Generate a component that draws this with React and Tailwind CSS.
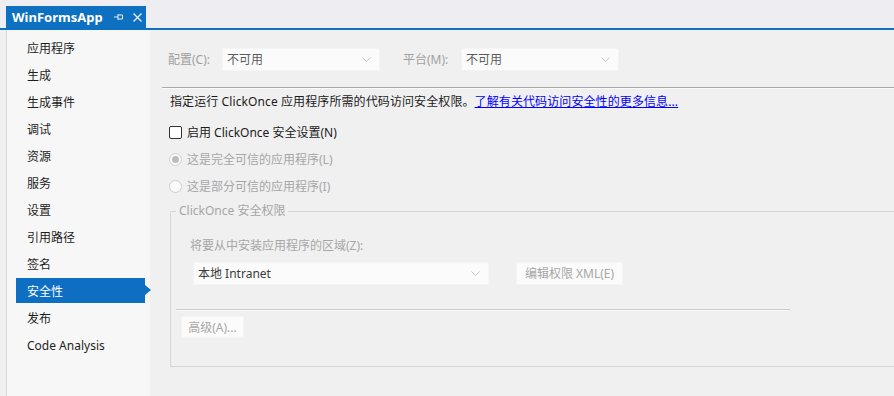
import React from "react";

const FONT = { fontFamily: '"Noto Sans", "Noto Sans CJK SC", sans-serif' };

const navItems = ["应用程序", "生成", "生成事件", "调试", "资源", "服务", "设置", "引用路径", "签名", "安全性", "发布", "Code Analysis"];

function Chevron() {
  return (
    <svg width="9" height="5" viewBox="0 0 9 5" className="shrink-0">
      <path d="M0.5 0.5 L4.5 4.5 L8.5 0.5" fill="none" stroke="#c6c6c6" strokeWidth="1" />
    </svg>
  );
}

function Select({ text, className, textClass }) {
  return (
    <div className={`h-[23px] bg-[#fbfbfb] border border-[#f4f4f4] flex items-center justify-between pl-[4px] pr-[8px] ${className}`}>
      <span className={`text-[12px] pt-[1px] ${textClass}`}>{text}</span>
      <Chevron />
    </div>
  );
}

export default function App() {
  return (
    <div className="w-[894px] h-[396px] flex flex-col overflow-hidden bg-[#f0f0f0]" style={FONT}>
      <div className="h-[28px] bg-[#eeeef2] flex items-end pl-[6px] shrink-0">
        <div className="h-[22px] w-[140px] bg-[#0e70c0] flex items-center pl-[6px] text-white">
          <span className="text-[13px] font-bold leading-none">WinFormsApp</span>
          <svg width="10" height="10" viewBox="0 0 10 10" className="ml-[11px]">
            <path d="M0 5 H4 M4 2 V8 M4 3 H8.5 V7 H4" fill="none" stroke="#e8f0fa" strokeWidth="1" />
          </svg>
          <svg width="9" height="9" viewBox="0 0 9 9" className="ml-[9px]">
            <path d="M0.5 0.5 L8.5 8.5 M8.5 0.5 L0.5 8.5" fill="none" stroke="#e8f0fa" strokeWidth="1.3" />
          </svg>
        </div>
      </div>
      <div className="h-[2px] bg-[#0e70c0] shrink-0" />
      <div className="flex flex-1 min-h-0">
        <div className="w-[7px] bg-[#f0f0f0] border-r border-[#d9d9de] shrink-0" />
        <nav className="w-[143px] shrink-0 bg-[#f7f7f7] pt-[5px] flex flex-col gap-[2px]">
          {navItems.map((it) =>
            it === "安全性" ? (
              <div key={it} className="relative ml-[9px] w-[129px] h-[25px] bg-[#0e6fc2] flex items-center pl-[11px] pt-[2px] text-[12px] text-white">
                {it}
                <div className="absolute left-[129px] top-[7px] w-0 h-0 border-y-[5.5px] border-y-transparent border-l-[6px] border-l-[#0e6fc2]" />
              </div>
            ) : (
              <div key={it} className="ml-[9px] h-[25px] flex items-center pl-[11px] pt-[2px] text-[12px] text-[#1e1e1e]">
                {it}
              </div>
            )
          )}
        </nav>
        <main className="flex-1 min-w-0 bg-[#f0f0f0] flex flex-col">
          <div className="mt-[18px] flex items-center pl-[18px]">
            <span className="w-[54px] text-[12px] pt-[1px] text-[#a0a0a0]">配置(C):</span>
            <Select text="不可用" className="w-[158px]" textClass="text-[#5c5c5c]" />
            <span className="ml-[23px] w-[58px] text-[12px] pt-[1px] text-[#a0a0a0]">平台(M):</span>
            <Select text="不可用" className="w-[158px]" textClass="text-[#5c5c5c]" />
          </div>
          <div className="mt-[16px] ml-[12px] h-[1px] bg-[#a9a9a9]" />
          <div className="ml-[12px] h-[1px] bg-[#fafafa]" />
          <div className="mt-[5px] pl-[20px] h-[16px] flex items-center text-[12px] text-[#1b1b1b] whitespace-nowrap tracking-[0.1px]">
            指定运行 ClickOnce 应用程序所需的代码访问安全权限。
            <span className="text-[#0000ff] underline">了解有关代码访问安全性的更多信息...</span>
          </div>
          <div className="mt-[14px] pl-[19px] h-[16px] flex items-center">
            <div className="w-[13px] h-[13px] border border-[#333] rounded-[2px] bg-white" />
            <span className="ml-[5px] pt-[1px] text-[12px] text-[#1b1b1b]">启用 ClickOnce 安全设置(N)</span>
          </div>
          <div className="mt-[11px] pl-[19px] h-[16px] flex items-center">
            <div className="w-[13px] h-[13px] rounded-full border border-[#cfcfcf] bg-[#fafafa] flex items-center justify-center">
              <div className="w-[7px] h-[7px] rounded-full bg-[#bdbdbd]" />
            </div>
            <span className="ml-[5px] pt-[1px] text-[12px] text-[#a6a6a6]">这是完全可信的应用程序(L)</span>
          </div>
          <div className="mt-[11px] pl-[19px] h-[16px] flex items-center">
            <div className="w-[13px] h-[13px] rounded-full border border-[#cfcfcf] bg-[#fafafa]" />
            <span className="ml-[5px] pt-[1px] text-[12px] text-[#a6a6a6]">这是部分可信的应用程序(I)</span>
          </div>
          <fieldset className="mt-[9px] ml-[20px] w-[760px] border-t border-l border-b border-[#d6d6d6] pb-[28px]">
            <legend className="ml-[5px] px-[3px] h-[16px] leading-[16px] text-[12px] text-[#a6a6a6]">ClickOnce 安全权限</legend>
            <div className="mt-[19px] ml-[19px] h-[16px] leading-[16px] text-[12px] text-[#a6a6a6]">将要从中安装应用程序的区域(Z):</div>
            <div className="mt-[8px] ml-[22px] flex items-center">
              <Select text="本地 Intranet" className="w-[296px]" textClass="text-[#3a3a3a]" />
              <div className="ml-[27px] h-[23px] w-[107px] bg-[#fbfbfb] border border-[#f4f4f4] flex items-center justify-center pt-[1px] text-[12px] text-[#a6a6a6]">
                编辑权限 XML(E)
              </div>
            </div>
            <div className="mt-[24px] ml-[5px] w-[614px] h-[1px] bg-[#cdcdc5]" />
            <div className="ml-[5px] w-[614px] h-[1px] bg-[#f8f8f8]" />
            <div className="mt-[5px] ml-[10px] h-[22px] w-[63px] bg-[#fbfbfb] border border-[#f4f4f4] flex items-center justify-center pt-[1px] text-[12px] text-[#a6a6a6]">
              高级(A)...
            </div>
          </fieldset>
        </main>
      </div>
    </div>
  );
}
